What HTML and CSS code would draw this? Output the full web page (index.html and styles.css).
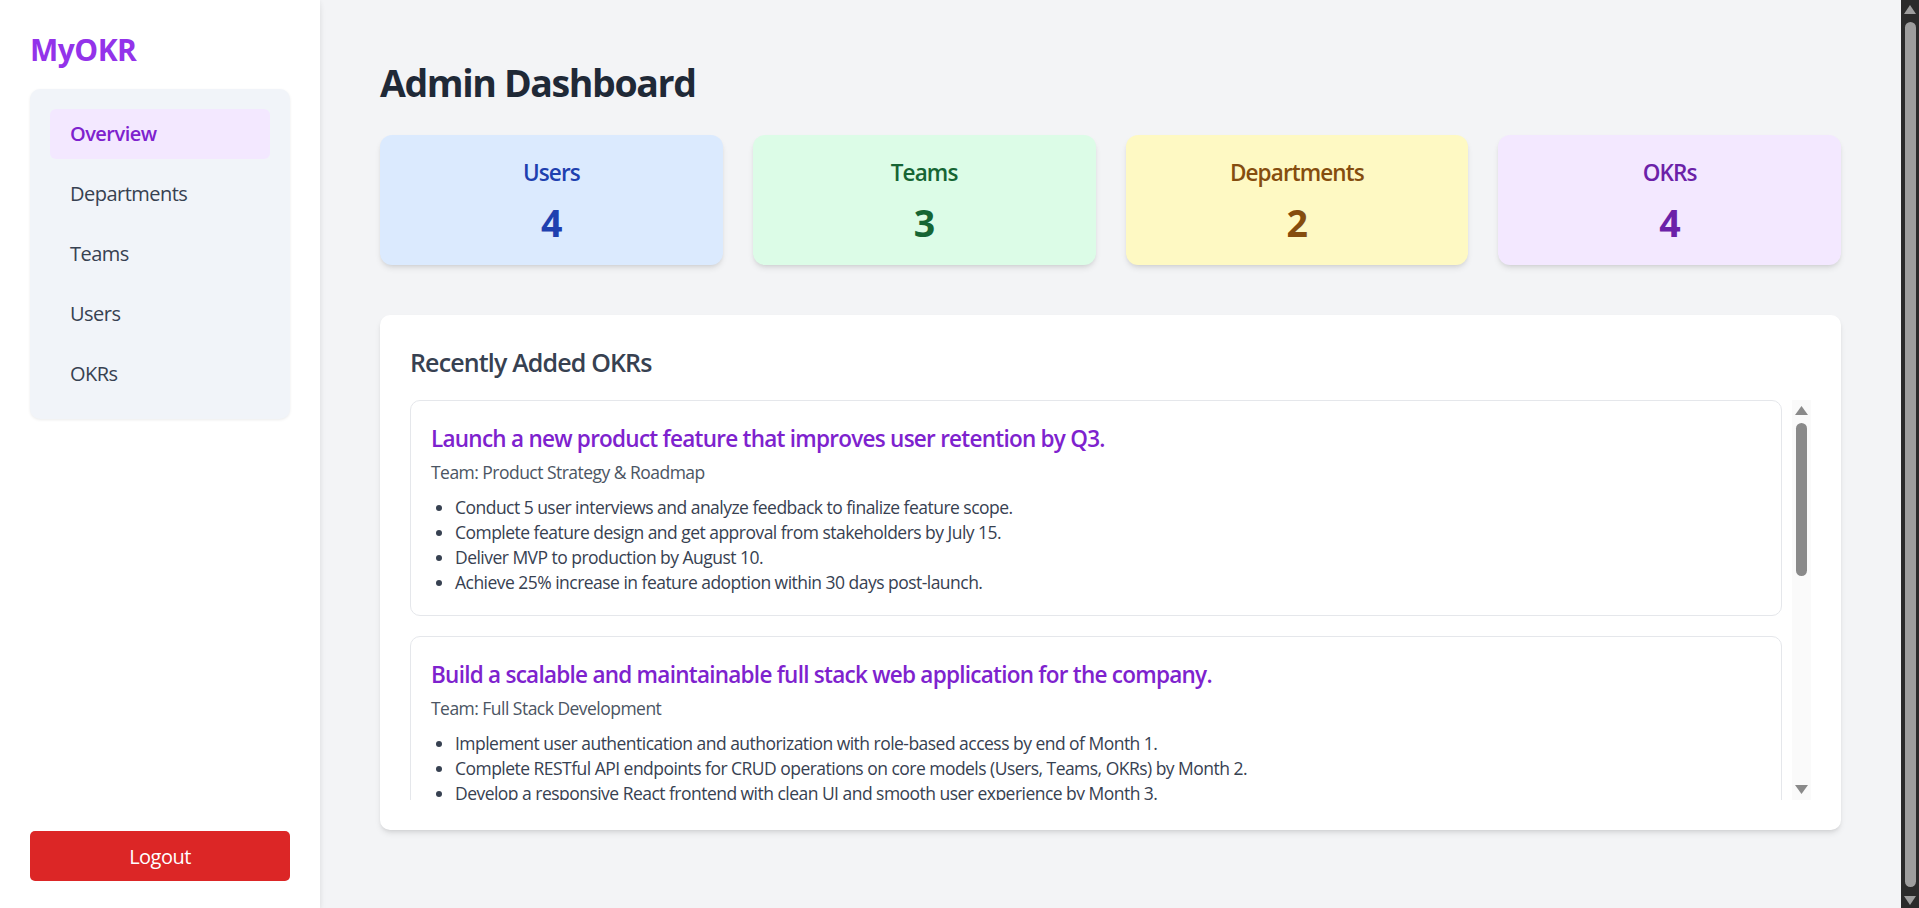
FILE: index.html
```html
<!DOCTYPE html>
<html lang="en">
<head>
<meta charset="utf-8">
<title>MyOKR - Admin Dashboard</title>
<link rel="stylesheet" href="styles.css">
</head>
<body>
<div class="layout">
  <aside class="sidebar">
    <div class="sidebar-top">
      <div class="logo">MyOKR</div>
      <nav class="nav-card">
        <a class="nav-item active">Overview</a>
        <a class="nav-item">Departments</a>
        <a class="nav-item">Teams</a>
        <a class="nav-item">Users</a>
        <a class="nav-item">OKRs</a>
      </nav>
    </div>
    <button class="logout">Logout</button>
  </aside>

  <main class="main">
    <h1 class="page-title">Admin Dashboard</h1>

    <div class="stats">
      <div class="stat stat-blue">
        <div class="stat-label">Users</div>
        <div class="stat-value">4</div>
      </div>
      <div class="stat stat-green">
        <div class="stat-label">Teams</div>
        <div class="stat-value">3</div>
      </div>
      <div class="stat stat-yellow">
        <div class="stat-label">Departments</div>
        <div class="stat-value">2</div>
      </div>
      <div class="stat stat-purple">
        <div class="stat-label">OKRs</div>
        <div class="stat-value">4</div>
      </div>
    </div>

    <section class="recent">
      <h2 class="recent-title">Recently Added OKRs</h2>
      <div class="okr-list">
        <div class="okr-scroll">
          <div class="okr">
            <div class="okr-title">Launch a new product feature that improves user retention by Q3.</div>
            <div class="okr-team">Team: Product Strategy &amp; Roadmap</div>
            <ul class="okr-krs">
              <li>Conduct 5 user interviews and analyze feedback to finalize feature scope.</li>
              <li>Complete feature design and get approval from stakeholders by July 15.</li>
              <li>Deliver MVP to production by August 10.</li>
              <li>Achieve 25% increase in feature adoption within 30 days post-launch.</li>
            </ul>
          </div>
          <div class="okr">
            <div class="okr-title">Build a scalable and maintainable full stack web application for the company.</div>
            <div class="okr-team">Team: Full Stack Development</div>
            <ul class="okr-krs">
              <li>Implement user authentication and authorization with role-based access by end of Month 1.</li>
              <li>Complete RESTful API endpoints for CRUD operations on core models (Users, Teams, OKRs) by Month 2.</li>
              <li>Develop a responsive React frontend with clean UI and smooth user experience by Month 3.</li>
              <li>Deploy the application with a CI/CD pipeline and reach 99% uptime by Month 4.</li>
            </ul>
          </div>
          <div class="okr">
            <div class="okr-title">Improve customer satisfaction score to 90% by end of the year.</div>
            <div class="okr-team">Team: Customer Success</div>
            <ul class="okr-krs">
              <li>Reduce average support response time to under 2 hours.</li>
              <li>Launch a self-service help center with 50 articles.</li>
              <li>Run quarterly customer feedback surveys.</li>
              <li>Resolve 95% of tickets within 24 hours.</li>
            </ul>
          </div>
        </div>
        <div class="vscroll" aria-hidden="true">
          <span class="vs-up"></span>
          <span class="vs-thumb"></span>
          <span class="vs-fill"></span>
          <span class="vs-down"></span>
        </div>
      </div>
    </section>
  </main>

  <div class="page-scroll" aria-hidden="true">
    <span class="ps-up"></span>
    <span class="ps-thumb"></span>
    <span class="ps-down"></span>
  </div>
</div>
</body>
</html>
```

FILE: styles.css
```css
* {
  box-sizing: border-box;
}

html, body {
  margin: 0;
  padding: 0;
  overflow: hidden;
}

body {
  font-family: "Open Sans", "Noto Sans", sans-serif;
  letter-spacing: -0.033em;
  color: #1f2937;
  background: #f3f4f6;
}

.layout {
  display: flex;
  height: 908px;
}

/* sidebar */
.sidebar {
  width: 320px;
  flex-shrink: 0;
  background: #ffffff;
  padding: 30px 30px 27px;
  display: flex;
  flex-direction: column;
  justify-content: space-between;
  box-shadow: 0 5px 8px -1px rgba(0, 0, 0, 0.08), 1px 0 4px rgba(0, 0, 0, 0.04);
  position: relative;
  z-index: 1;
}

.logo {
  font-size: 30px;
  line-height: 40px;
  font-weight: 700;
  color: #9333ea;
  margin-bottom: 19px;
}

.nav-card {
  background: #f1f4f9;
  border-radius: 10px;
  padding: 20px;
  display: flex;
  flex-direction: column;
  gap: 10px;
  box-shadow: 0 1px 3px rgba(0, 0, 0, 0.08);
}

.nav-item {
  display: block;
  padding: 10px 20px;
  font-size: 20px;
  line-height: 30px;
  color: #374151;
  border-radius: 6px;
  cursor: pointer;
}

.nav-item.active {
  background: #f3e8ff;
  color: #7e22ce;
  font-weight: 600;
}

.logout {
  width: 100%;
  height: 50px;
  border: none;
  border-radius: 5px;
  background: #dc2626;
  color: #ffffff;
  font-family: inherit;
  letter-spacing: inherit;
  font-size: 20px;
  cursor: pointer;
}

/* main */
.main {
  flex: 1;
  min-width: 0;
  padding: 60px;
}

.page-title {
  margin: 0 0 30px;
  font-size: 37.5px;
  line-height: 45px;
  font-weight: 700;
  letter-spacing: -0.037em;
  color: #1f2937;
}

.stats {
  display: grid;
  grid-template-columns: repeat(4, 1fr);
  gap: 30px;
  margin-bottom: 50px;
}

.stat {
  border-radius: 12px;
  padding: 20px;
  text-align: center;
  box-shadow: 0 4px 6px -1px rgba(0, 0, 0, 0.1), 0 2px 4px -2px rgba(0, 0, 0, 0.1);
}

.stat-label {
  font-size: 22.5px;
  line-height: 35px;
  font-weight: 600;
  letter-spacing: -0.04em;
}

.stat-value {
  margin-top: 10px;
  font-size: 37.5px;
  line-height: 45px;
  font-weight: 700;
}

.stat-blue { background: #dbeafe; color: #1e40af; }
.stat-green { background: #dcfce7; color: #166534; }
.stat-yellow { background: #fef9c3; color: #854d0e; }
.stat-purple { background: #f3e8ff; color: #6b21a8; }

.recent {
  background: #ffffff;
  border-radius: 10px;
  padding: 30px;
  box-shadow: 0 4px 6px -1px rgba(0, 0, 0, 0.1), 0 2px 4px -2px rgba(0, 0, 0, 0.1);
}

.recent-title {
  margin: 0 0 20px;
  font-size: 25px;
  line-height: 35px;
  font-weight: 600;
  letter-spacing: -0.034em;
  color: #374151;
}

.okr-list {
  height: 400px;
  display: flex;
}

.okr-scroll {
  flex: 1;
  min-width: 0;
  overflow: hidden;
  padding-right: 10px;
  display: flex;
  flex-direction: column;
  gap: 20px;
}

.okr {
  flex-shrink: 0;
  border: 1px solid #e5e7eb;
  border-radius: 10px;
  padding: 20px;
  background: #ffffff;
}

.okr-title {
  font-size: 22.5px;
  line-height: 35px;
  font-weight: 600;
  letter-spacing: -0.033em;
  color: #7e22ce;
}

.okr-team {
  margin-top: 4px;
  font-size: 17.5px;
  line-height: 25px;
  color: #4b5563;
}

.okr-krs {
  margin: 10px 0 0;
  padding-left: 24px;
  list-style: disc;
  font-size: 17.5px;
  line-height: 25px;
  color: #374151;
}

/* inner list scrollbar */
.vscroll {
  width: 19px;
  flex-shrink: 0;
  background: #fafafa;
  display: flex;
  flex-direction: column;
  align-items: center;
  padding: 6px 0;
}

.vs-up,
.vs-down {
  display: block;
  width: 13px;
  height: 9px;
  background: #8a8a8a;
}

.vs-up {
  clip-path: polygon(50% 0, 100% 100%, 0 100%);
  margin-bottom: 8px;
}

.vs-down {
  clip-path: polygon(0 0, 100% 0, 50% 100%);
}

.vs-thumb {
  display: block;
  width: 11px;
  height: 153px;
  border-radius: 6px;
  background: #8a8a8a;
}

.vs-fill {
  flex: 1;
}

/* page scrollbar */
.page-scroll {
  width: 18px;
  flex-shrink: 0;
  background: #2b2b2b;
  display: flex;
  flex-direction: column;
  align-items: center;
  padding: 5px 0 3px;
}

.ps-up,
.ps-down {
  display: block;
  width: 12px;
  height: 9px;
  background: #9e9e9e;
}

.ps-up {
  clip-path: polygon(50% 0, 100% 100%, 0 100%);
  margin-bottom: 8px;
}

.ps-down {
  clip-path: polygon(0 0, 100% 0, 50% 100%);
  margin-top: 9px;
}

.ps-thumb {
  display: block;
  flex: 1;
  align-self: stretch;
  margin: 0 3px 0 4px;
  border-radius: 6px;
  background: #9e9e9e;
}
```
